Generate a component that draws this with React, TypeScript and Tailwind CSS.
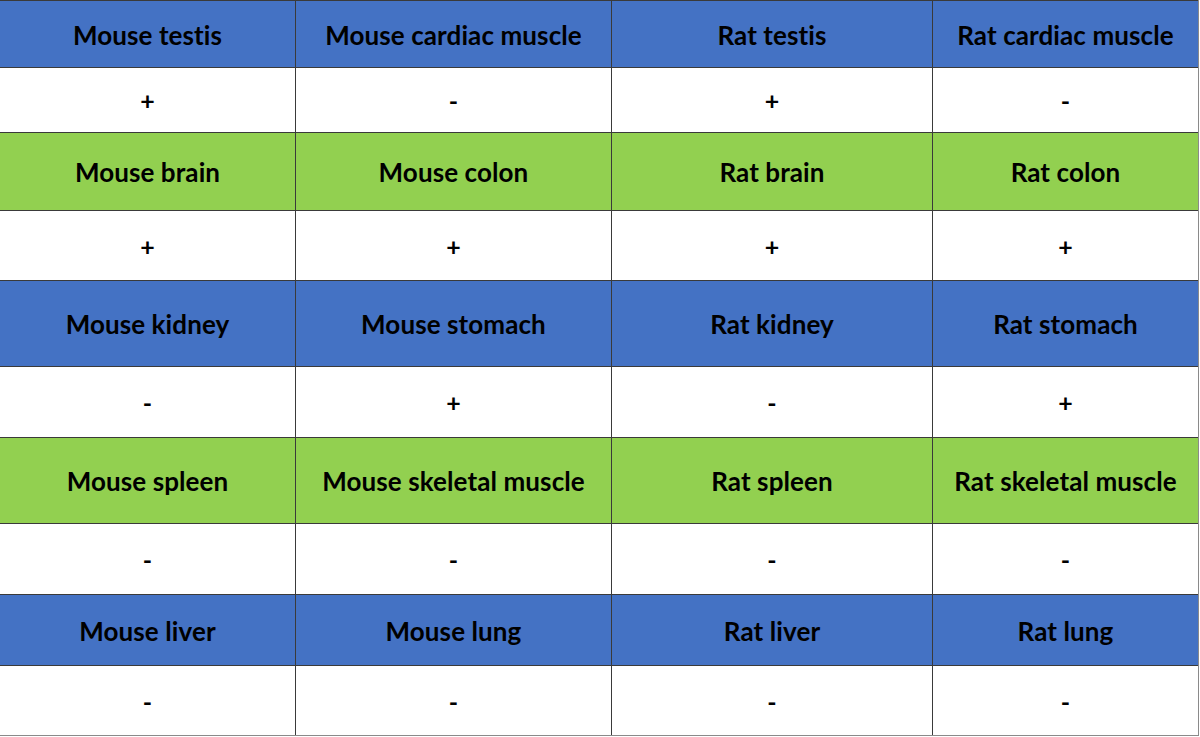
const rows: { kind: "blue" | "green" | "white"; cells: string[] }[] = [
  { kind: "blue", cells: ["Mouse testis", "Mouse cardiac muscle", "Rat testis", "Rat cardiac muscle"] },
  { kind: "white", cells: ["+", "-", "+", "-"] },
  { kind: "green", cells: ["Mouse brain", "Mouse colon", "Rat brain", "Rat colon"] },
  { kind: "white", cells: ["+", "+", "+", "+"] },
  { kind: "blue", cells: ["Mouse kidney", "Mouse stomach", "Rat kidney", "Rat stomach"] },
  { kind: "white", cells: ["-", "+", "-", "+"] },
  { kind: "green", cells: ["Mouse spleen", "Mouse skeletal muscle", "Rat spleen", "Rat skeletal muscle"] },
  { kind: "white", cells: ["-", "-", "-", "-"] },
  { kind: "blue", cells: ["Mouse liver", "Mouse lung", "Rat liver", "Rat lung"] },
  { kind: "white", cells: ["-", "-", "-", "-"] },
];

const bg = {
  blue: "bg-[#4472c4]",
  green: "bg-[#92d050]",
  white: "bg-white",
};

export default function App() {
  return (
    <div className="w-[1200px] h-[737px] bg-white font-['Lato',sans-serif] font-bold text-black">
      <div className="grid grid-cols-[296px_316px_321px_265px] grid-rows-[68px_65px_78px_70px_86px_71px_86px_71px_71px_69px] w-[1199px] h-[736px] border-r border-b border-[#8a8a8a]">
        {rows.map((row, r) =>
          row.cells.map((c, i) => (
            <div
              key={`${r}-${i}`}
              className={`${bg[row.kind]} flex items-center justify-center pt-[2px] border-[#3a3a3a] ${
                i < 3 ? "border-r" : ""
              } ${r < rows.length - 1 ? "border-b" : ""} ${r === 0 ? "border-t" : ""} ${
                row.kind === "white" ? "text-[25px]" : "text-[26px] tracking-[0.1px]"
              }`}
            >
              {c}
            </div>
          ))
        )}
      </div>
    </div>
  );
}
